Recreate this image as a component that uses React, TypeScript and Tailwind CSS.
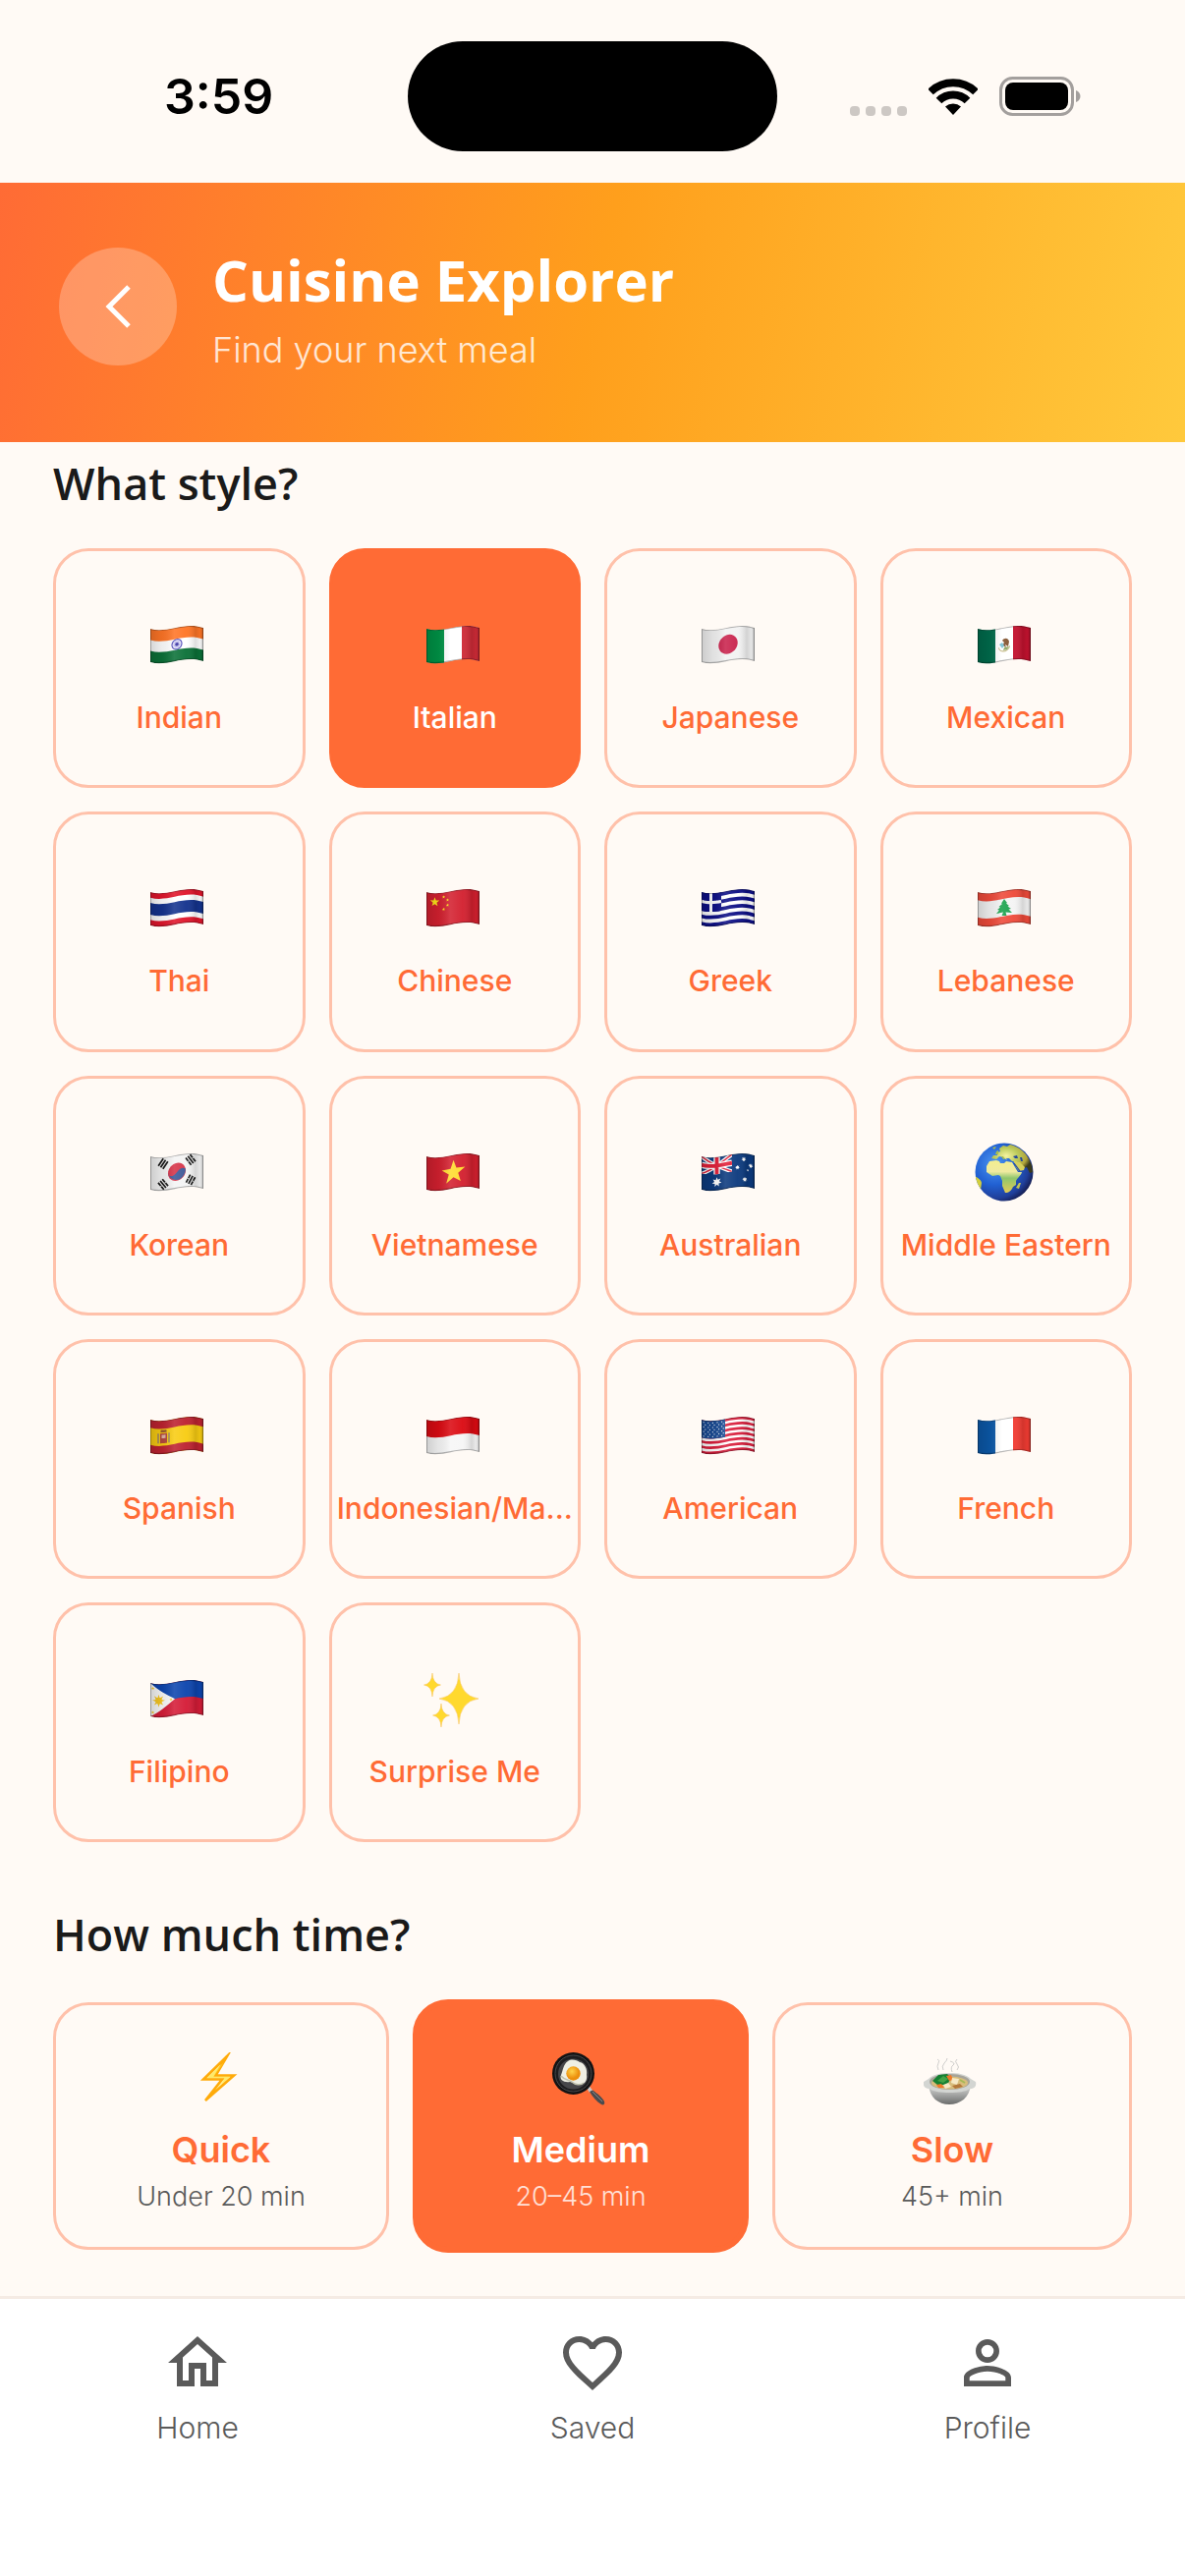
import { useId, useState } from "react";
import type { ReactNode } from "react";
import { MdFavoriteBorder, MdOutlineHome, MdPersonOutline } from "react-icons/md";

/* ---------- Waving flag geometry: a 54 x 34 cloth bent along a curve ---------- */

const lift = (x: number) => {
  const t = x / 54;
  const s = 1 - t;
  return 3 * s * s * s + 24 * s * s * t - 15 * s * t * t + 2 * t * t * t;
};

const pt = (x: number, y: number) => `${x.toFixed(2)} ${(y + lift(x)).toFixed(2)}`;

const band = (a: number, b: number) =>
  `M0 ${3 + a}C18 ${8 + a} 34 ${a - 5} 54 ${2 + a}V${2 + b}C34 ${b - 5} 18 ${8 + b} 0 ${3 + b}Z`;

const block = (x0: number, x1: number, y0: number, y1: number) => {
  const xs = Array.from({ length: 9 }, (_, i) => x0 + ((x1 - x0) * i) / 8);
  const top = xs.map((x) => pt(x, y0));
  const bottom = [...xs].reverse().map((x) => pt(x, y1));
  return `M${[...top, ...bottom].join("L")}Z`;
};

const line = (x0: number, y0: number, x1: number, y1: number) =>
  `M${Array.from({ length: 9 }, (_, i) => pt(x0 + ((x1 - x0) * i) / 8, y0 + ((y1 - y0) * i) / 8)).join("L")}`;

const disc = (cx: number, cy: number, r: number, from = 0, to = 360) =>
  `M${Array.from({ length: 33 }, (_, i) => {
    const a = ((from + ((to - from) * i) / 32) * Math.PI) / 180;
    return pt(cx + r * Math.cos(a), cy + r * Math.sin(a));
  }).join("L")}${to - from === 360 ? "Z" : ""}`;

const star = (cx: number, cy: number, r: number, points = 5, inner = 0.4) =>
  `M${Array.from({ length: points * 2 }, (_, i) => {
    const a = (i * Math.PI) / points - Math.PI / 2;
    const k = i % 2 ? r * inner : r;
    return pt(cx + k * Math.cos(a), cy + k * Math.sin(a));
  }).join("L")}Z`;

function Flag({ base = "#fff", children }: { base?: string; children: ReactNode }) {
  const id = useId();
  return (
    <svg viewBox="0 -1 54 40" className="h-10 w-[54px]" aria-hidden="true">
      <defs>
        <clipPath id={`${id}c`}>
          <path d={band(0, 34)} />
        </clipPath>
        <linearGradient id={`${id}g`}>
          <stop offset="0" stopColor="#000" stopOpacity=".16" />
          <stop offset=".22" stopColor="#000" stopOpacity=".07" />
          <stop offset=".45" stopColor="#fff" stopOpacity=".12" />
          <stop offset=".68" stopColor="#fff" stopOpacity=".04" />
          <stop offset=".85" stopColor="#000" stopOpacity=".13" />
          <stop offset=".94" stopColor="#000" stopOpacity=".05" />
          <stop offset="1" stopColor="#000" stopOpacity=".25" />
        </linearGradient>
      </defs>
      <g clipPath={`url(#${id}c)`}>
        <path d={band(0, 34)} fill={base} />
        {children}
        <path d={band(0, 34)} fill={`url(#${id}g)`} />
        <path d={band(0, 34)} fill="none" stroke="#000" strokeOpacity=".28" strokeWidth="2" />
      </g>
    </svg>
  );
}

const India = () => (
  <Flag>
    <path d={band(0, 11.5)} fill="#ff7526" />
    <path d={band(22.5, 34)} fill="#0b7138" />
    <path d={disc(27, 17, 5)} fill="#e4e3f8" stroke="#4b45b8" strokeWidth="1.1" />
    <path d={star(27, 17, 4.4, 12, 0.35)} fill="#8f8bd8" />
    <path d={disc(27, 17, 1.6)} fill="#37309f" />
  </Flag>
);

const Italy = () => (
  <Flag>
    <path d="M0-2H18V40H0Z" fill="#009246" />
    <path d="M36-2H54V40H36Z" fill="#ce2b37" />
  </Flag>
);

const Japan = () => (
  <Flag base="#f2f2f2">
    <path d={disc(27, 17, 9.7)} fill="#c9234d" />
  </Flag>
);

const Mexico = () => (
  <Flag>
    <path d="M0-2H18V40H0Z" fill="#006b4c" />
    <path d="M36-2H54V40H36Z" fill="#c4122f" />
    <path d={disc(27, 18.5, 5.6, 10, 170)} fill="none" stroke="#c4b884" strokeWidth="1.2" />
    <path d="M25 15C27 12 31 12 32 16L31 21 28 19 29 22 25 20 27 17Z" fill="#80502b" />
    <path d="M22 19 25 17 27 20 25 23Z" fill="#73bed1" />
    <path d="M27 22 32 21 30 24 26 25Z" fill="#8aa45d" />
  </Flag>
);

const Thailand = () => (
  <Flag>
    <path d={band(0, 5.7)} fill="#e0152b" />
    <path d={band(11, 23)} fill="#14338e" />
    <path d={band(28.3, 34)} fill="#e0152b" />
  </Flag>
);

const China = () => (
  <Flag base="#d3202f">
    <g fill="#ffe81a">
      <path d={star(8.5, 9, 5)} />
      <path d={star(17.5, 4.5, 1.7)} />
      <path d={star(21.5, 8.2, 1.7)} />
      <path d={star(21.5, 13.5, 1.7)} />
      <path d={star(17.5, 17, 1.7)} />
    </g>
  </Flag>
);

const Greece = () => (
  <Flag>
    {[0, 2, 4, 6, 8].map((i) => (
      <path key={i} d={band((i * 34) / 9, ((i + 1) * 34) / 9)} fill="#0d0f86" />
    ))}
    <path d={block(0, 20, 0, 18.9)} fill="#0d0f86" />
    <path d={line(0, 9.4, 20, 9.4)} stroke="#fff" strokeWidth="3.2" />
    <path d="M9.5 0V24" stroke="#fff" strokeWidth="3" />
  </Flag>
);

const Lebanon = () => (
  <Flag base="#f4f4f4">
    <path d={band(0, 8.2)} fill="#ee4a3a" />
    <path d={band(25.8, 34)} fill="#ee4a3a" />
    <path
      d="M27 10 30 14 29 14.500 32 17 30.500 17.500 34 20 31.500 20.500 35 24 28.500 23.500 29.500 27H24.500L26 23.500 19 25 22 21.500 20 21 23 18.500 21.500 18 25 15 24 14.500Z"
      fill="#18a24c"
    />
  </Flag>
);

const trigrams = [
  { x: 13, y: 6.5, a: -56 },
  { x: 41, y: 6.5, a: 52 },
  { x: 13, y: 27.5, a: 50 },
  { x: 41, y: 27, a: -62 },
];

const Korea = () => (
  <Flag base="#f4f4f4">
    <path d={disc(27, 17, 9)} fill="#d63348" />
    <path
      d={`M${pt(18.2, 18.5)}Q${pt(22, 23)} ${pt(27, 17.5)}T${pt(35.9, 15.5)}C36 21 32 27 26.500 27C22 27 18.500 24 18.200 20Z`}
      fill="#3c5797"
    />
    {trigrams.map((g, i) => (
      <g key={i} transform={`translate(${g.x} ${g.y + lift(g.x)}) rotate(${g.a})`} stroke="#161616" strokeWidth="1.7">
        <path d="M-4.500-2.800H4.500M-4.500 0H4.500M-4.500 2.800H4.500" />
        {i > 0 && <path d="M-.5-2.800H.5M-.5 2.800H.5" stroke="#d9d9d9" />}
      </g>
    ))}
  </Flag>
);

const Vietnam = () => (
  <Flag base="#d3202f">
    <path d={star(27.5, 17.5, 12.5)} fill="#ffdb2e" />
  </Flag>
);

const Australia = () => {
  const id = useId();
  return (
    <Flag base="#0c3a7e">
      <clipPath id={id}>
        <path d={block(0, 31, 0, 17.5)} />
      </clipPath>
      <g clipPath={`url(#${id})`} fill="none">
        <path d={line(0, 0, 31, 17.5)} stroke="#fff" strokeWidth="4" />
        <path d={line(31, 0, 0, 17.5)} stroke="#fff" strokeWidth="4" />
        <path d={line(0, 0, 31, 17.5)} stroke="#e2203a" strokeWidth="1.5" />
        <path d={line(31, 0, 0, 17.5)} stroke="#e2203a" strokeWidth="1.5" />
        <path d={`${line(0, 8.7, 31, 8.7)}M15.500 0V24`} stroke="#fff" strokeWidth="6.4" />
        <path d={`${line(0, 8.7, 31, 8.7)}M15.500 0V24`} stroke="#e2203a" strokeWidth="3.8" />
      </g>
      <g fill="#fff">
        <path d={star(15.5, 25.5, 5, 7, 0.5)} />
        <path d={star(43, 6, 2.5, 7, 0.5)} />
        <path d={star(36.5, 14, 2.5, 7, 0.5)} />
        <path d={star(50, 12, 2.5, 7, 0.5)} />
        <path d={star(47, 17, 1.4)} />
        <path d={star(44, 26.5, 2.7, 7, 0.5)} />
      </g>
    </Flag>
  );
};

const Spain = () => (
  <Flag base="#f8cc12">
    <path d={band(0, 8.3)} fill="#bd2230" />
    <path d={band(25.7, 34)} fill="#bd2230" />
    <path d={block(10, 17, 13, 23)} fill="#b5473d" />
    <path d={block(11.5, 15.5, 14.5, 18)} fill="#e0b5a1" />
    <path d={block(10.5, 16.5, 9.5, 12)} fill="#9a5b2c" />
    <path d={`${line(8, 13, 8, 23)}${line(19, 13, 19, 23)}`} stroke="#a38962" strokeWidth="1.6" />
  </Flag>
);

const Indonesia = () => (
  <Flag base="#f6f6f6">
    <path d={band(0, 17)} fill="#db0a12" />
  </Flag>
);

const Usa = () => (
  <Flag>
    {[0, 2, 4, 6, 8, 10, 12].map((i) => (
      <path key={i} d={band((i * 34) / 13, ((i + 1) * 34) / 13)} fill="#d91e3c" />
    ))}
    <path d={block(0, 24, 0, 18.3)} fill="#1a4b94" />
    {Array.from({ length: 35 }, (_, i) => {
      const row = Math.floor(i / 5);
      return (
        <path key={i} d={disc(2.2 + (i % 5) * 4.6 + (row % 2) * 1.6, 2.2 + row * 2.35, 0.62)} fill="#e6edf7" />
      );
    })}
  </Flag>
);

const France = () => (
  <Flag>
    <path d="M0-2H18V40H0Z" fill="#0b58a8" />
    <path d="M36-2H54V40H36Z" fill="#f23c33" />
  </Flag>
);

const Philippines = () => (
  <Flag base="#d51c37">
    <path d={band(0, 17)} fill="#0d45ae" />
    <path d={`${line(0, 0, 25, 17)}L${line(25, 17, 0, 34).slice(1)}Z`} fill="#fafafa" />
    <g fill="#f9c923">
      <path d={star(8.5, 17, 6.5, 8, 0.45)} />
      <path d={disc(8.5, 17, 3.3)} />
      <path d={star(2.5, 5, 1.8)} />
      <path d={star(2.5, 29.5, 1.8)} />
      <path d={star(21, 17, 1.8)} />
    </g>
  </Flag>
);

/* ---------- Other pictograms ---------- */

const Globe = () => (
  <svg viewBox="0 0 60 60" className="size-15" aria-hidden="true">
    <defs>
      <radialGradient id="sea" cx=".34" cy=".36" r=".72">
        <stop offset="0" stopColor="#4d97f3" />
        <stop offset=".5" stopColor="#2160d2" />
        <stop offset=".82" stopColor="#203f9a" />
        <stop offset="1" stopColor="#141a4c" />
      </radialGradient>
      <radialGradient id="land" cx=".36" cy=".4" r=".62">
        <stop offset="0" stopColor="#f6f4a0" />
        <stop offset=".45" stopColor="#bccb5c" />
        <stop offset=".8" stopColor="#b0a43a" />
        <stop offset="1" stopColor="#39391b" />
      </radialGradient>
      <linearGradient id="africa" x2="0" y2="1">
        <stop offset="0" stopColor="#f3ee8e" />
        <stop offset=".35" stopColor="#efeaa0" />
        <stop offset=".55" stopColor="#8fc66c" />
        <stop offset="1" stopColor="#e4cb55" />
      </linearGradient>
      <clipPath id="orb">
        <circle cx="30" cy="30" r="29.500" />
      </clipPath>
    </defs>
    <circle cx="30" cy="30" r="29.500" fill="url(#sea)" />
    <g clipPath="url(#orb)">
      <path
        d="M17 16 19 13 23 13 23 10 26 9 25 6 29 3 33 4 36 2C45 4 54 11 58 23L59 30 56 31 53 25 50 26 48 23 45 20 41 19 38 19 35 16 32 16 33 18 29 15 25 14 22 17Z"
        fill="url(#land)"
      />
      <path d="M39 18 46 20 51 25 50 28 45 29 42 25Z" fill="#d6d05b" />
      <path
        d="M15 19 22 18 25 19 26 21 30 21 32 19 38 20 41 25 44 30 48 30C47 34 43 36 42 39L42 43 39 45C37 49 35 51 31 51L28 44 28 39 26 34 24 33 18 34 12 30 12 24Z"
        fill="url(#africa)"
      />
      <path d="M45 41 47 41 45 47 42 46Z" fill="#c1c456" />
      <path d="M0 34C3 36 7 38 7 41L6 48 2 42Z" fill="#d3cf3c" />
      <path d="M22 9 24 8 24 12 21 12ZM18 5 22 4 20 7ZM27 14 29 14 31 17 29 17Z" fill="#a9bd4e" />
      <path d="M39 14 43 13 44 16 41 16ZM46 15 48 15 49 19 47 19Z" fill="#24489a" />
      <path d="M40 21 46 29" stroke="#24489a" strokeWidth="1.2" />
    </g>
  </svg>
);

const twinkle = (cx: number, cy: number, w: number, h: number) =>
  `M${cx} ${cy - h}Q${cx + w * 0.06} ${cy - h * 0.1} ${cx + w} ${cy}Q${cx + w * 0.06} ${cy + h * 0.1} ${cx} ${cy + h}Q${cx - w * 0.06} ${cy + h * 0.1} ${cx - w} ${cy}Q${cx - w * 0.06} ${cy - h * 0.1} ${cx} ${cy - h}Z`;

const Sparkles = () => (
  <svg viewBox="0 0 60 60" className="size-15" aria-hidden="true">
    <g fill="#ffd92e" stroke="#f6c15a" strokeWidth=".5">
      <path d={twinkle(36, 30, 20, 26)} />
      <path d={twinkle(9, 16, 8.5, 12)} />
      <path d={twinkle(18, 47, 8.5, 12)} />
    </g>
  </svg>
);

const Bolt = () => (
  <svg viewBox="-8 0 54 54" className="size-[54px]" aria-hidden="true">
    <path
      d="M27 4 15.500 23.500H34L5 49 22 27.500H3Z"
      fill="#fff3a0"
      stroke="#ffab0a"
      strokeWidth="2.600"
      strokeMiterlimit="8"
    />
    <path d="M24 10 13.500 24.800H30L21 33 25 26H7Z" fill="#ffe23a" opacity=".55" />
  </svg>
);

const Pan = () => (
  <svg viewBox="0 0 54 54" className="size-[54px]" aria-hidden="true">
    <defs>
      <radialGradient id="yolk" cx=".4" cy=".35">
        <stop offset="0" stopColor="#ffd34a" />
        <stop offset="1" stopColor="#ec8f0c" />
      </radialGradient>
    </defs>
    <path d="M35 36 38 34.500 42 40 38 41Z" fill="#c7c7c7" />
    <path d="M38 40 41 38.500C46 42 51 46 53 50 54 53 52 54 50 53 45 50 41 45 38 40Z" fill="#4b4b4d" />
    <path d="M41 40 51 50" stroke="#858587" />
    <circle cx="21.500" cy="21.500" r="21.500" fill="#121213" />
    <circle cx="21.500" cy="21.500" r="18.500" fill="#1d1d1f" stroke="#49494b" />
    <circle cx="21.500" cy="22" r="15.500" fill="#47474a" />
    <path
      d="M16 9C20 6 25 8 28 10 33 11 36 17 35 23 36 28 33 33 29 32 25 34 21 30 18 30 12 31 7 28 9 23 11 19 11 12 16 9Z"
      fill="#efefe4"
    />
    <path d="M9 24C12 28 17 28 20 30 23 33 29 34 32 31" fill="none" stroke="#bfc1ad" strokeWidth="1.500" />
    <circle cx="21.500" cy="21.500" r="7.200" fill="url(#yolk)" />
  </svg>
);

const Pot = () => (
  <svg viewBox="0 -6 54 54" className="size-[54px]" aria-hidden="true">
    <defs>
      <linearGradient id="bowl" x2="0" y2="1">
        <stop offset="0" stopColor="#d9dad8" />
        <stop offset=".55" stopColor="#9fa09f" />
        <stop offset="1" stopColor="#6a6c6b" />
      </linearGradient>
    </defs>
    <g fill="none" stroke="#b9b9b9" strokeOpacity=".7" strokeWidth="1">
      <path d="M15 12Q13 8 15 5T14 1M20 12Q18 8 21 5T24 0M29 14Q27 9 30 7T27 3M34 12Q37 9 34 6T34 1" />
    </g>
    <path d="M5 27C6 40 15 47 26 47S47 40 48 27Z" fill="url(#bowl)" />
    <path
      d="M5 21 0 24C-1 28 1 31 6 31 10 34 18 35 26.500 35S43 34 47 31C52 31 54 28 53 24L48 21C43 16 35 15 26.500 15S10 16 5 21Z"
      fill="#d3d5d2"
    />
    <ellipse cx="26.500" cy="24" rx="20.500" ry="8" fill="#a7a49a" />
    <ellipse cx="26.500" cy="25" rx="18.500" ry="6.500" fill="#d8bd7c" />
    <path d="M9 23 15 17 24 16 28 20 24 27 14 27Z" fill="#168032" />
    <path d="M14 23 20 18 25 21 20 25Z" fill="#43a346" />
    <path d="M23 18 28 17 30 22 26 23ZM13 27 18 26 21 30 15 30Z" fill="#ef7a2a" />
    <path d="M29 20 36 21 34 27 28 25ZM20 27 25 25 28 29 22 31Z" fill="#f6e9c5" />
    <path d="M29 28 37 26 40 29 32 31Z" fill="#b4783a" />
    <path d="M37 22 42 25" stroke="#a4b956" strokeWidth="2" />
  </svg>
);

/* ---------- Data ---------- */

const cuisines = [
  { name: "Indian", Icon: India },
  { name: "Italian", Icon: Italy },
  { name: "Japanese", Icon: Japan },
  { name: "Mexican", Icon: Mexico },
  { name: "Thai", Icon: Thailand },
  { name: "Chinese", Icon: China },
  { name: "Greek", Icon: Greece },
  { name: "Lebanese", Icon: Lebanon },
  { name: "Korean", Icon: Korea },
  { name: "Vietnamese", Icon: Vietnam },
  { name: "Australian", Icon: Australia },
  { name: "Middle Eastern", Icon: Globe },
  { name: "Spanish", Icon: Spain },
  { name: "Indonesian/Ma...", Icon: Indonesia },
  { name: "American", Icon: Usa },
  { name: "French", Icon: France },
  { name: "Filipino", Icon: Philippines },
  { name: "Surprise Me", Icon: Sparkles },
];

const times = [
  { name: "Quick", detail: "Under 20 min", Icon: Bolt },
  { name: "Medium", detail: "20–45 min", Icon: Pan },
  { name: "Slow", detail: "45+ min", Icon: Pot },
];

const tabs = [
  { name: "Home", Icon: MdOutlineHome },
  { name: "Saved", Icon: MdFavoriteBorder },
  { name: "Profile", Icon: MdPersonOutline },
];

/* ---------- Page parts ---------- */

function StatusBar() {
  return (
    <div className="grid h-[186px] grid-cols-[1fr_auto_1fr] items-center pt-2.5">
      <div className="pl-[167px] text-[50px] leading-none font-semibold text-black">3:59</div>
      <div className="h-28 w-94 rounded-full bg-black" />
      <div className="flex items-center justify-end gap-[22px] pr-[106px]">
        <div className="flex gap-1.5 self-end">
          {[0, 1, 2, 3].map((i) => (
            <span key={i} className="size-2.5 rounded-[4px] bg-[#cdc8c4]" />
          ))}
        </div>
        <svg viewBox="0 0 50 38" className="h-[38px] w-[50px]" aria-hidden="true">
          <g fill="none" stroke="#000" strokeWidth="8">
            <path d="M2 14.500A33 33 0 0 1 48 14.500" />
            <path d="M10.500 23.500A20.500 20.500 0 0 1 39.500 23.500" />
          </g>
          <path d="M17 29.500A12 12 0 0 1 33 29.500L25 38Z" />
        </svg>
        <svg viewBox="0 0 83 40" className="h-10 w-[83px]" aria-hidden="true">
          <rect x="1.500" y="1.500" width="73" height="37" rx="12" fill="none" stroke="#a39f9d" strokeWidth="3" />
          <rect x="6" y="6" width="64" height="28" rx="8" />
          <path d="M78 14C84 16 84 24 78 26Z" fill="#a39f9d" />
        </svg>
      </div>
    </div>
  );
}

export default function App() {
  const [cuisine, setCuisine] = useState("Italian");
  const [time, setTime] = useState("Medium");

  return (
    <div className="flex min-h-screen flex-col bg-[#fffaf5] font-['Inter',sans-serif]">
      <StatusBar />

      <header className="flex h-66 items-center gap-9 bg-[linear-gradient(102deg,#ff6b35,#ff9f1c_50%,#ffc93c)] px-15 pb-3">
        <button
          type="button"
          aria-label="Back"
          className="flex size-30 shrink-0 items-center justify-center rounded-full bg-white/25"
        >
          <svg viewBox="0 0 28 48" className="h-12 w-7" fill="none" stroke="#fff" strokeWidth="5" aria-hidden="true">
            <path d="M25 4 5 24 25 44" />
          </svg>
        </button>
        <div className="pt-2">
          <h1 className="font-['Open_Sans',sans-serif] text-[58px] leading-[72px] font-bold text-white">
            Cuisine Explorer
          </h1>
          <p className="mt-2 text-4xl leading-[54px] font-light text-white/80">Find your next meal</p>
        </div>
      </header>

      <main className="flex-1 px-[54px] pt-3 pb-10">
        <section>
          <h2 className="font-['Open_Sans',sans-serif] text-[45px] leading-[60px] font-semibold text-[#1a1a1a]">
            What style?
          </h2>
          <div className="mt-9 grid grid-cols-4 gap-6">
            {cuisines.map(({ name, Icon }) => (
              <button
                key={name}
                type="button"
                aria-pressed={name === cuisine}
                onClick={() => setCuisine(name)}
                className={`flex aspect-[21/20] min-w-0 flex-col items-center justify-center rounded-[36px] border-3 ${
                  name === cuisine
                    ? "border-[#ff6b35] bg-[#ff6b35] text-white"
                    : "border-[#ffc1aa] text-[#ff6b35]"
                }`}
              >
                <span className="flex h-22 items-center pr-1">
                  <Icon />
                </span>
                <span className="mt-3 text-3xl leading-9 font-medium whitespace-nowrap">{name}</span>
              </button>
            ))}
          </div>
        </section>

        <section className="mt-16">
          <h2 className="font-['Open_Sans',sans-serif] text-[45px] leading-[60px] font-semibold text-[#1a1a1a]">
            How much time?
          </h2>
          <div className="mt-9 grid grid-cols-3 items-center">
            {times.map(({ name, detail, Icon }) => (
              <div key={name} className="pr-6 last:pr-0">
                <button
                  type="button"
                  aria-pressed={name === time}
                  onClick={() => setTime(name)}
                  className={`flex w-full flex-col items-center rounded-[36px] pt-[37px] pb-[33px] ${
                    name === time
                      ? "border-6 border-[#ff6b35] bg-[#ff6b35] text-white"
                      : "border-3 border-[#ffc1aa] text-[#ff6b35]"
                  }`}
                >
                  <span className="flex h-19 items-center pr-1">
                    <Icon />
                  </span>
                  <span className="mt-2.5 text-4xl leading-12 font-semibold">{name}</span>
                  <span
                    className={`mt-1.5 text-[27px] leading-9 font-light ${
                      name === time ? "text-white/80" : "text-[#5a5a5a]"
                    }`}
                  >
                    {detail}
                  </span>
                </button>
              </div>
            ))}
          </div>
        </section>
      </main>

      <nav className="grid grid-cols-3 border-t-3 border-[#f5ebe4] bg-white pt-[29px] pb-[133px]">
        {tabs.map(({ name, Icon }) => (
          <a key={name} href={`#${name.toLowerCase()}`} className="flex flex-col items-center text-[#5a5a5a]">
            <Icon className="size-18" aria-hidden="true" />
            <span className="mt-3 text-3xl leading-9 font-light">{name}</span>
          </a>
        ))}
      </nav>
    </div>
  );
}
